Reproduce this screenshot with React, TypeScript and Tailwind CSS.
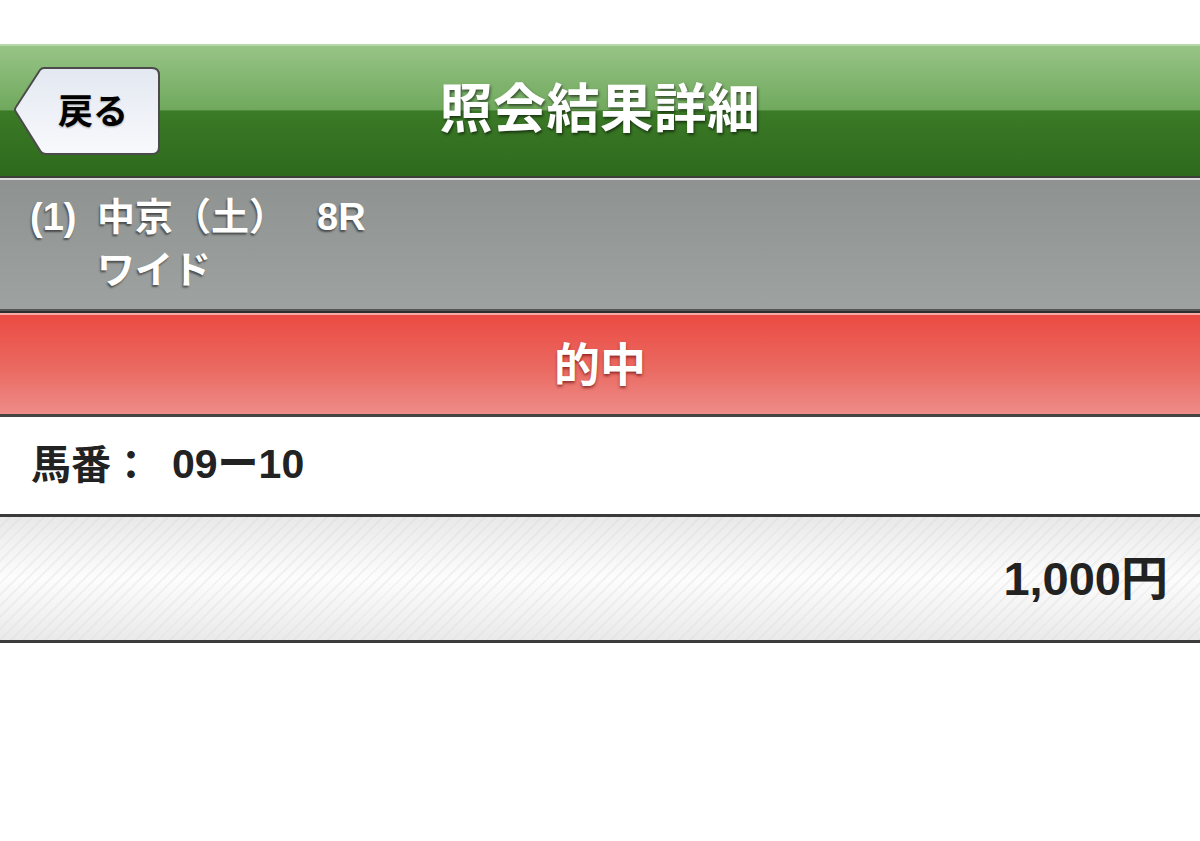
import React from "react";

const font = "font-['Liberation_Sans','Noto_Sans_CJK_JP',sans-serif]";

function BackButton() {
  return (
    <div className="relative w-[150px] h-[91px]">
      <svg className="absolute inset-0" width="150" height="91" viewBox="0 0 150 91">
        <defs>
          <linearGradient id="bb" x1="0" y1="0" x2="0" y2="1">
            <stop offset="0" stopColor="#e3e8f1" />
            <stop offset="1" stopColor="#f8f9fc" />
          </linearGradient>
        </defs>
        <path
          d="M31 2 H139 Q146 2 146 9 V81 Q146 88 139 88 H33 Q30 88 28 86 L3 46 Q1 43.5 3 41 L27 4 Q28.5 2 31 2 Z"
          fill="url(#bb)"
          stroke="#4b4b4b"
          strokeWidth="2"
        />
      </svg>
      <div className={`absolute inset-0 flex items-center pl-[45px] pt-[1px] text-[35px] font-bold text-black ${font} [text-shadow:0_1px_2px_rgba(0,0,0,0.35)]`}>
        戻る
      </div>
    </div>
  );
}

export default function App() {
  return (
    <div className={`w-[1200px] h-[841px] bg-white ${font}`}>
      <div className="h-[44px] bg-white" />
      {/* Header */}
      <div className="h-[132px] border-t-2 border-[#b7d8a9] bg-[linear-gradient(to_bottom,#97c486_0%,#70a95d_49%,#3b7a27_50%,#2e6a1c_100%)] grid grid-cols-[1fr_auto_1fr] items-center">
        <div className="pl-[13px] pt-[1px]">
          <BackButton />
        </div>
        <div className="text-white font-bold text-[53px] tracking-[0.5px] leading-none pb-[4px] [text-shadow:1px_2px_3px_rgba(0,0,0,0.55)]">
          照会結果詳細
        </div>
        <div />
      </div>
      <div className="h-[2px] bg-[#3a3f37]" />
      <div className="h-[2px] bg-[#dcdcdc]" />
      {/* Gray race info */}
      <div className="h-[129px] bg-[linear-gradient(to_bottom,#8e9290,#9ea3a1)] px-[30px] pt-[11px] flex text-white font-bold text-[38px] leading-[53px] [text-shadow:-1px_2px_2px_rgba(0,0,0,0.5)]">
        <div className="w-[67px]">(1)</div>
        <div className="flex flex-col">
          <div className="flex">
            <span>中京（土）</span>
            <span className="ml-[30px]">8R</span>
          </div>
          <div>ワイド</div>
        </div>
      </div>
      <div className="h-[2px] bg-[#555]" />
      <div className="h-[2px] bg-[#2f2f2f]" />
      <div className="h-[2px] bg-[#f7a9a4]" />
      {/* Red hit bar */}
      <div className="h-[99px] bg-[linear-gradient(to_bottom,#eb4b42,#ea6a62_55%,#ee8c88)] flex items-center justify-center text-white font-bold text-[46px] leading-none [text-shadow:0_2px_3px_rgba(90,0,0,0.6)]">
        的中
      </div>
      <div className="h-[3px] bg-[#444]" />
      {/* Horse numbers */}
      <div className="h-[97px] bg-white flex items-center px-[31px] text-[#222] font-bold text-[40px] leading-none pb-[2px]">
        <span>馬番：</span>
        <span className="ml-[21px] text-[41px]">09ー10</span>
      </div>
      <div className="h-[3px] bg-[#3a3a3a]" />
      {/* Amount */}
      <div className="h-[123px] flex items-center justify-end pr-[32px] text-[#222] font-bold text-[47px] leading-none [background-image:linear-gradient(to_bottom,rgba(225,225,225,0.7),rgba(255,255,255,0.45)_50%,rgba(228,228,228,0.75)),repeating-linear-gradient(135deg,#fbfbfb_0px,#fbfbfb_6px,#e8e8e8_6px,#e8e8e8_8px)]">
        1,000円
      </div>
      <div className="h-[3px] bg-[#3c3c3c]" />
    </div>
  );
}
